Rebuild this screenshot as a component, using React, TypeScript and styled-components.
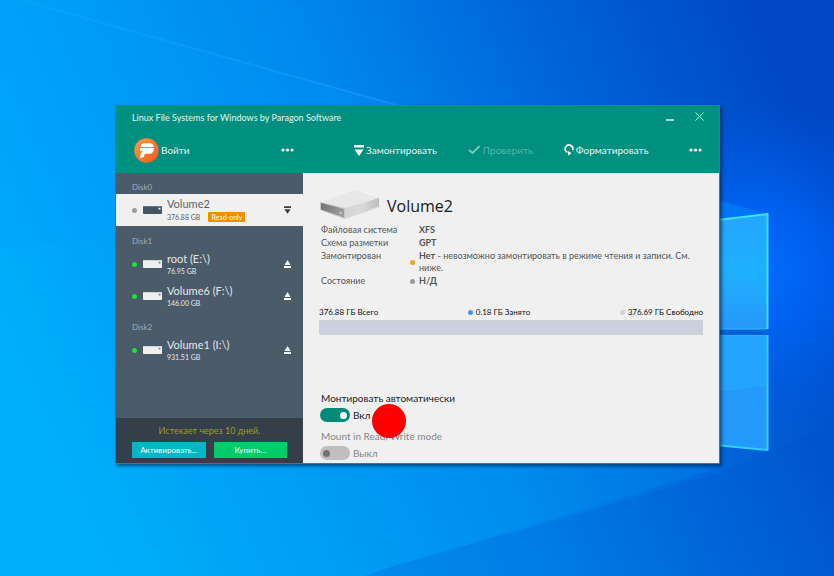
import React from 'react';
import styled, { createGlobalStyle, css } from 'styled-components';

const GlobalStyle = createGlobalStyle`
  *, *::before, *::after { box-sizing: border-box; }
  body { margin: 0; font-family: Lato, 'Open Sans', sans-serif; font-size: 9px; line-height: 12px; }
  button { font: inherit; color: inherit; border: 0; padding: 0; background: none; cursor: pointer; }
  h1, h2, p, dl, dd, dt, ul { margin: 0; padding: 0; font-weight: 400; }
  ul { list-style: none; }
  svg { display: block; flex: none; }
`;

const Desktop = styled.div`
  position: relative;
  isolation: isolate;
  display: flex;
  min-height: 100vh;
  padding: 105px 114px 112px 115px;
  background: #0078e8;
`;

const WallpaperArt = styled.svg`
  position: absolute;
  inset: 0;
  z-index: -1;
  width: 100%;
  height: 100%;
`;

const Window = styled.div`
  flex: 1;
  min-width: 0;
  display: flex;
  flex-direction: column;
  border: 1px solid #17917f;
  background: #f0f0f0;
  box-shadow: 2px 2px 3px rgba(0, 30, 60, 0.6);
`;

const Header = styled.header`
  background: #00907f;
  color: #e4f5f2;
`;

const TitleBar = styled.div`
  display: flex;
  align-items: center;
  height: 24px;
  padding: 0 15px 0 16px;
`;

const Title = styled.h1`
  flex: 1;
  font-size: 9px;
  line-height: 12px;
`;

const WindowButton = styled.button`
  display: grid;
  place-items: center;
  width: 30px;
  height: 24px;
  padding-bottom: 3px;
  &:last-child { width: 19px; justify-items: end; }
`;

const Toolbar = styled.div`
  display: flex;
  height: 43px;
  padding-bottom: 3px;
`;

const SideTools = styled.div`
  flex: none;
  display: flex;
  align-items: center;
  justify-content: space-between;
  width: 187px;
  padding: 0 9px 0 18px;
`;

const MainTools = styled.div`
  flex: 1;
  display: flex;
  align-items: center;
  gap: 31px;
  padding: 0 17px 0 51px;
`;

const ToolButton = styled.button<{ $push?: boolean }>`
  display: flex;
  align-items: center;
  gap: 2px;
  font-size: 10px;
  line-height: 14px;
  white-space: nowrap;
  ${(p) => p.$push && css`margin-left: auto;`}
  &:disabled { color: #5db5aa; cursor: default; }
`;

const Body = styled.div`
  flex: 1;
  display: flex;
`;

const Sidebar = styled.nav`
  flex: none;
  display: flex;
  flex-direction: column;
  width: 187px;
  background: #4b5b6a;
`;

const DiskList = styled.div`
  flex: 1;
  display: flex;
  flex-direction: column;
  gap: 1px;
`;

const DiskLabel = styled.h2`
  padding: 8px 16px 1px;
  font-size: 8px;
  line-height: 12px;
  color: #a3adb5;
`;

const VolumeRow = styled.li<{ $selected?: boolean }>`
  display: flex;
  align-items: center;
  height: 32px;
  padding: 0 11px 0 16px;
  color: ${(p) => (p.$selected ? '#606060' : '#e3e7ea')};
  background: ${(p) => (p.$selected ? '#f0f0f0' : 'transparent')};
`;

const Dot = styled.span<{ $color: string }>`
  flex: none;
  width: 5px;
  height: 5px;
  border-radius: 50%;
  background: ${(p) => p.$color};
`;

const VolumeButton = styled.button`
  flex: 1;
  display: flex;
  align-items: center;
  text-align: left;
  & > svg { margin: 0 5px 0 6px; }
`;

const VolumeName = styled.span`
  display: block;
  font-size: 11px;
  line-height: 14px;
`;

const VolumeMeta = styled.span`
  display: flex;
  gap: 8px;
  align-items: center;
  font-size: 7px;
  line-height: 11px;
`;

const Badge = styled.span`
  margin: 1px 0;
  padding: 0 3px;
  border-radius: 1px;
  line-height: 10px;
  color: #fff;
  background: #f09000;
`;

const IconButton = styled.button`
  display: grid;
  place-items: center;
  width: 10px;
  height: 16px;
`;

const License = styled.div`
  display: grid;
  grid-template-columns: 1fr 1fr;
  gap: 5px 8px;
  padding: 7px 16px 5px;
  background: #343f4a;
`;

const Expiry = styled.p`
  grid-column: 1 / -1;
  text-align: center;
  color: #9c9d20;
`;

const ActionButton = styled.button<{ $color: string }>`
  height: 16px;
  font-size: 8px;
  line-height: 14px;
  color: #fff;
  background: ${(p) => p.$color};
`;

const Details = styled.main`
  flex: 1;
  min-width: 0;
  display: flex;
  flex-direction: column;
  padding: 17px 16px 3px;
  color: #555;
`;

const VolumeHeading = styled.div`
  display: flex;
  align-items: center;
  gap: 6px;
  height: 31px;
  padding-left: 1px;
  & > h2 { font-family: 'Open Sans', sans-serif; font-size: 16px; line-height: 24px; color: #1a1a1a; }
`;

const Facts = styled.dl`
  display: grid;
  grid-template-columns: 88px 1fr;
  row-gap: 1px;
  padding: 3px 4px 0 1px;
  dt { padding-left: 1px; }
`;

const FactValue = styled.dd`
  display: flex;
  align-items: center;
  gap: 4px;
  padding-left: 2px;
  b { font-weight: 700; color: #555; }
`;

const Capacity = styled.section`
  display: flex;
  flex-direction: column;
  gap: 2px;
  padding-top: 19px;
`;

const CapacityLegend = styled.div`
  display: flex;
  justify-content: space-between;
  font-size: 8px;
  line-height: 12px;
  color: #111;
`;

const LegendItem = styled.span`
  display: flex;
  align-items: center;
  gap: 3px;
`;

const CapacityBar = styled.div`
  height: 15px;
  border-radius: 1px;
  background: #cbd0dd;
`;

const Options = styled.section`
  display: flex;
  flex-direction: column;
  gap: 8px;
  margin-top: auto;
  padding-left: 1px;
`;

const Option = styled.label<{ $muted?: boolean }>`
  position: relative;
  display: flex;
  flex-wrap: wrap;
  align-items: center;
  gap: 4px 3px;
  font-size: 10px;
  line-height: 12px;
  color: ${(p) => (p.$muted ? '#858585' : '#1c1c1c')};
`;

const OptionTitle = styled.span`
  width: 100%;
  padding-left: 1px;
`;

const Switch = styled.input`
  appearance: none;
  display: flex;
  align-items: center;
  width: 30px;
  height: 14px;
  margin: 0;
  padding: 0 3px;
  border-radius: 7px;
  background: #bfbfbf;
  &::before {
    content: '';
    width: 7px;
    height: 7px;
    border-radius: 50%;
    background: #737373;
  }
  &:checked { justify-content: flex-end; background: #008a78; }
  &:checked::before { background: #fff; }
`;

const ClickMarker = styled.span`
  position: absolute;
  left: 52px;
  top: 12px;
  width: 34px;
  height: 34px;
  border-radius: 50%;
  background: #f00;
  z-index: 1;
`;

const Wallpaper = () => (
  <WallpaperArt viewBox="0 0 834 576" preserveAspectRatio="none" aria-hidden="true">
    <defs>
      <linearGradient id="sky" x1="0" y1="0.65" x2="1" y2="0.35">
        <stop offset="0" stopColor="#00b0fd" />
        <stop offset="0.25" stopColor="#009df6" />
        <stop offset="0.5" stopColor="#0088ec" />
        <stop offset="0.75" stopColor="#0065da" />
        <stop offset="1" stopColor="#0048c6" />
      </linearGradient>
      <radialGradient id="glow" cx="755" cy="270" r="170" gradientUnits="userSpaceOnUse">
        <stop offset="0" stopColor="#006eff" />
        <stop offset="0.4" stopColor="#0064f8" stopOpacity="0.75" />
        <stop offset="1" stopColor="#005ae0" stopOpacity="0" />
      </radialGradient>
      <linearGradient id="beam" x1="0" y1="0" x2="400" y2="0" gradientUnits="userSpaceOnUse">
        <stop offset="0" stopColor="#22b0ff" stopOpacity="0.2" />
        <stop offset="1" stopColor="#22a0ff" stopOpacity="0.45" />
      </linearGradient>
      <linearGradient id="pane" x1="0" y1="0" x2="0" y2="1">
        <stop offset="0" stopColor="#24a6ff" />
        <stop offset="0.5" stopColor="#1fb0ff" />
        <stop offset="1" stopColor="#2598fb" />
      </linearGradient>
    </defs>
    <rect width="834" height="576" fill="url(#sky)" />
    <rect width="834" height="576" fill="url(#glow)" />
    <path d="M0 0H20L400 106L500 130L400 200L0 250Z" fill="#009cff" opacity="0.16" />
    <path d="M20 0L400 106" stroke="url(#beam)" strokeWidth="2" />
    <path d="M0 488L116 468H720L394 566L364 576H0Z" fill="#00b4f8" opacity="0.14" />
    <path d="M768 452L834 425V576H364L394 566L720 473Z" fill="#0048c0" opacity="0.16" />
    <path d="M720 201L768 214L720 220Z" fill="#0090ff" opacity="0.45" />
    <path d="M700 222L767 214V329H700Z" fill="url(#pane)" />
    <path d="M700 335H767V450L700 444Z" fill="#2399fc" />
    <path d="M700 335H767V386L700 394Z" fill="#24a4ff" />
    <path d="M700 329H767" stroke="#35b8ff" strokeWidth="1" />
    <path d="M700 335.500H767" stroke="#35b0ff" strokeWidth="1" />
    <path d="M700 222L767.500 214V329" fill="none" stroke="#3ce2ff" strokeWidth="2" />
    <path d="M767.500 335V450L700 443.500" fill="none" stroke="#2fd0ff" strokeWidth="2" />
    <path d="M700 332H768" stroke="#0062d8" strokeWidth="4" />
  </WallpaperArt>
);

const Logo = () => (
  <svg width="25" height="25" viewBox="0 0 25 25" aria-hidden="true">
    <defs>
      <linearGradient id="logo" x1="0" y1="0" x2="1" y2="1">
        <stop offset="0" stopColor="#ff9a3c" />
        <stop offset="1" stopColor="#ef5a24" />
      </linearGradient>
    </defs>
    <circle cx="12.500" cy="12.500" r="12.200" fill="url(#logo)" />
    <path d="M6.500 9Q7 5.200 10.500 5.200H15.500Q19.500 5.200 19.800 9Z" fill="#fff" />
    <path d="M6 10H20Q19.800 15.800 15.500 15.800H10.800L10.300 17.500Q9.800 19.700 7.800 19.700H5.800L6.800 15.500Q7.500 12.800 10 12.800H6Z" fill="#fff" />
  </svg>
);

const MountIcon = ({ size, color = '#fff' }: { size: number; color?: string }) => (
  <svg width={size} height={size + 1} viewBox="0 0 10 11" fill={color} aria-hidden="true">
    <path d="M0 0H10V2.500H0ZM0.500 4.500H9.500L5 11Z" />
  </svg>
);

const EjectIcon = () => (
  <svg width="7" height="8" viewBox="0 0 7 8" fill="#fff" aria-hidden="true">
    <path d="M3.500 0L6.600 5H0.400ZM0 6H7V8H0Z" />
  </svg>
);

const CheckIcon = () => (
  <svg width="13" height="10" viewBox="0 0 13 10" aria-hidden="true">
    <path d="M1 5L4.500 8L11.700 1" fill="none" stroke="#7cc4ba" strokeWidth="2" />
  </svg>
);

const FormatIcon = () => (
  <svg width="10" height="12" viewBox="0 0 10 12" aria-hidden="true">
    <path d="M3.200 8.200A3.800 3.800 0 1 1 8.600 6.200" fill="none" stroke="#fff" strokeWidth="1.700" />
    <path d="M3.500 6.800L7.600 9.200L4.300 11.500Z" fill="#fff" />
  </svg>
);

const MoreIcon = () => (
  <svg width="13" height="4" viewBox="0 0 13 4" fill="#fff" aria-hidden="true">
    <circle cx="2" cy="2" r="1.600" />
    <circle cx="6.500" cy="2" r="1.600" />
    <circle cx="11" cy="2" r="1.600" />
  </svg>
);

const DriveIcon = ({ dark }: { dark?: boolean }) => (
  <svg width="19" height="8" viewBox="0 0 19 8" aria-hidden="true">
    <rect width="19" height="8" rx="0.800" fill={dark ? '#455564' : '#f0f0f0'} />
    <path d="M0 0.500H19" stroke={dark ? '#687582' : '#d0d4d8'} />
    <rect x="15.500" y="1.800" width="2" height="1.600" fill={dark ? '#fff' : '#7b858e'} />
  </svg>
);

const DriveArt = () => (
  <svg width="61" height="31" viewBox="0 0 61 31" aria-hidden="true">
    <defs>
      <linearGradient id="driveSide" x1="0" y1="0" x2="1" y2="0">
        <stop offset="0" stopColor="#d4d4d4" />
        <stop offset="0.5" stopColor="#dadada" />
        <stop offset="1" stopColor="#bcbcbc" />
      </linearGradient>
      <linearGradient id="driveFront" x1="0" y1="0" x2="1" y2="0.400">
        <stop offset="0" stopColor="#707070" />
        <stop offset="1" stopColor="#9c9c9c" />
      </linearGradient>
    </defs>
    <path d="M25 29L61 17L58 15Z" fill="#dedede" />
    <path d="M0 12L35 0L59 8L25 18Z" fill="#e8e8e8" />
    <path d="M25 18L59 8V16L25 29Z" fill="url(#driveSide)" />
    <path d="M0 12L25 18V29L0 20Z" fill="#c6c6c6" />
    <path d="M1 13L24 19V27.500L1 19.500Z" fill="url(#driveFront)" />
    <circle cx="20.500" cy="23" r="1" fill="#e0e0e0" />
  </svg>
);

type Volume = { name: string; size: string; mounted: boolean; readOnly?: boolean };

const disks: { name: string; volumes: Volume[] }[] = [
  { name: 'Disk0', volumes: [{ name: 'Volume2', size: '376.88 GB', mounted: false, readOnly: true }] },
  {
    name: 'Disk1',
    volumes: [
      { name: 'root (E:\\)', size: '76.95 GB', mounted: true },
      { name: 'Volume6 (F:\\)', size: '146.00 GB', mounted: true },
    ],
  },
  { name: 'Disk2', volumes: [{ name: 'Volume1 (I:\\)', size: '931.51 GB', mounted: true }] },
];

const VolumeItem = ({ volume }: { volume: Volume }) => (
  <VolumeRow $selected={!volume.mounted}>
    <VolumeButton type="button">
      <Dot $color={volume.mounted ? '#1ce23c' : '#9c9c9c'} />
      <DriveIcon dark={!volume.mounted} />
      <span>
        <VolumeName>{volume.name}</VolumeName>
        <VolumeMeta>
          {volume.size}
          {volume.readOnly && <Badge>Read-only</Badge>}
        </VolumeMeta>
      </span>
    </VolumeButton>
    <IconButton type="button" aria-label={volume.mounted ? 'Eject' : 'Mount'}>
      {volume.mounted ? <EjectIcon /> : <MountIcon size={7} color="#3c3c3c" />}
    </IconButton>
  </VolumeRow>
);

export default function App() {
  return (
    <>
      <GlobalStyle />
      <Desktop>
        <Wallpaper />
        <Window>
          <Header>
            <TitleBar>
              <Title>Linux File Systems for Windows by Paragon Software</Title>
              <WindowButton type="button" aria-label="Minimize">
                <svg width="8" height="10" viewBox="0 0 8 10"><path d="M0 8H8" stroke="#a6d7d0" strokeWidth="2" /></svg>
              </WindowButton>
              <WindowButton type="button" aria-label="Close">
                <svg width="9" height="9" viewBox="0 0 9 9"><path d="M0.500 0.500L8.500 8.500M8.500 0.500L0.500 8.500" stroke="#c9ece7" strokeWidth="1" /></svg>
              </WindowButton>
            </TitleBar>
            <Toolbar>
              <SideTools>
                <ToolButton type="button"><Logo />Войти</ToolButton>
                <ToolButton type="button" aria-label="Меню"><MoreIcon /></ToolButton>
              </SideTools>
              <MainTools>
                <ToolButton type="button"><MountIcon size={10} />Замонтировать</ToolButton>
                <ToolButton type="button" disabled><CheckIcon />Проверить</ToolButton>
                <ToolButton type="button"><FormatIcon />Форматировать</ToolButton>
                <ToolButton type="button" $push aria-label="Ещё"><MoreIcon /></ToolButton>
              </MainTools>
            </Toolbar>
          </Header>
          <Body>
            <Sidebar>
              <DiskList>
                {disks.map((disk) => (
                  <section key={disk.name}>
                    <DiskLabel>{disk.name}</DiskLabel>
                    <ul>
                      {disk.volumes.map((v) => <VolumeItem key={v.name} volume={v} />)}
                    </ul>
                  </section>
                ))}
              </DiskList>
              <License>
                <Expiry>Истекает через 10 дней.</Expiry>
                <ActionButton type="button" $color="#00b7c3">Активировать...</ActionButton>
                <ActionButton type="button" $color="#00cc6a">Купить...</ActionButton>
              </License>
            </Sidebar>
            <Details>
              <VolumeHeading>
                <DriveArt />
                <h2>Volume2</h2>
              </VolumeHeading>
              <Facts>
                <dt>Файловая система</dt>
                <FactValue><Dot $color="transparent" /><b>XFS</b></FactValue>
                <dt>Схема разметки</dt>
                <FactValue><Dot $color="transparent" /><b>GPT</b></FactValue>
                <dt>Замонтирован</dt>
                <FactValue>
                  <Dot $color="#faa21b" />
                  <span><b>Нет</b> - невозможно замонтировать в режиме чтения и записи. См. ниже.</span>
                </FactValue>
                <dt>Состояние</dt>
                <FactValue><Dot $color="#999" /><b>Н/Д</b></FactValue>
              </Facts>
              <Capacity>
                <CapacityLegend>
                  <LegendItem>376.88 ГБ Всего</LegendItem>
                  <LegendItem><Dot $color="#4896e8" />0.18 ГБ Занято</LegendItem>
                  <LegendItem><Dot $color="#cbd0dd" />376.69 ГБ Свободно</LegendItem>
                </CapacityLegend>
                <CapacityBar />
              </Capacity>
              <Options>
                <Option>
                  <OptionTitle>Монтировать автоматически</OptionTitle>
                  <Switch type="checkbox" role="switch" defaultChecked />
                  Вкл
                  <ClickMarker />
                </Option>
                <Option $muted>
                  <OptionTitle>Mount in Read/Write mode</OptionTitle>
                  <Switch type="checkbox" role="switch" disabled />
                  Выкл
                </Option>
              </Options>
            </Details>
          </Body>
        </Window>
      </Desktop>
    </>
  );
}
